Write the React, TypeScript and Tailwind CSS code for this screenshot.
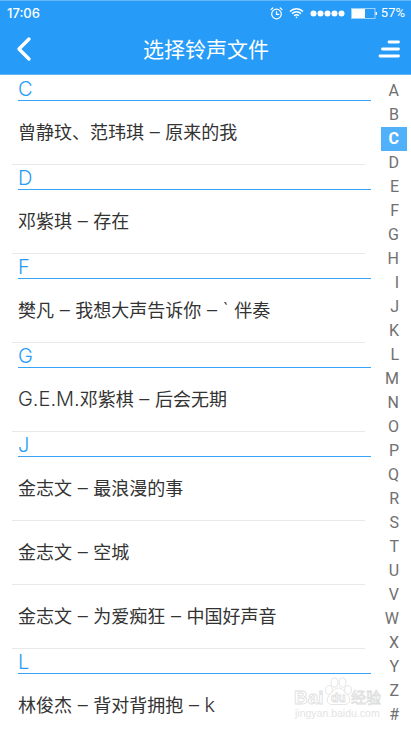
import React from "react";

interface Section {
  letter: string;
  songs: string[];
}

const sections: Section[] = [
  { letter: "C", songs: ["曾静玟、范玮琪 – 原来的我"] },
  { letter: "D", songs: ["邓紫琪 – 存在"] },
  { letter: "F", songs: ["樊凡 – 我想大声告诉你 – ` 伴奏"] },
  { letter: "G", songs: ["G.E.M.邓紫棋 – 后会无期"] },
  {
    letter: "J",
    songs: ["金志文 – 最浪漫的事", "金志文 – 空城", "金志文 – 为爱痴狂 – 中国好声音"],
  },
  { letter: "L", songs: ["林俊杰 – 背对背拥抱 – k"] },
];

const indexLetters = "ABCDEFGHIJKLMNOPQRSTUVWXYZ#".split("");

const StatusBar: React.FC = () => (
  <div className="flex h-6 items-center justify-between pl-[7px] pr-[6px] text-[13px] leading-6">
    <span className="font-[Inter,sans-serif] font-medium">17:06</span>
    <div className="flex items-center gap-[6px]">
      <svg width="13" height="13" viewBox="0 0 13 13" fill="none" stroke="currentColor" strokeWidth="1.2" strokeLinecap="round">
        <circle cx="6.5" cy="7" r="4.8" />
        <path d="M6.5 4.5V7.3H8.8M1 2.6 2.8 1M12 2.6 10.2 1" />
      </svg>
      <svg width="15" height="12" viewBox="0 0 15 12" fill="none" stroke="currentColor" strokeWidth="1.5">
        <path d="M1 4.4C4.6 .7 10.4 .7 14 4.4M3.1 6.6C5.6 4.2 9.4 4.2 11.9 6.6M5.1 8.8C6.5 7.5 8.5 7.5 9.9 8.8" />
        <circle cx="7.5" cy="10.4" r=".8" fill="currentColor" stroke="none" />
      </svg>
      <svg width="35" height="7" viewBox="0 0 35 7" fill="currentColor">
        <circle cx="3.5" cy="3.5" r="3" />
        <circle cx="10.5" cy="3.5" r="3" />
        <circle cx="17.5" cy="3.5" r="3" />
        <circle cx="24.5" cy="3.5" r="3" />
        <circle cx="31.5" cy="3.5" r="3" />
      </svg>
      <div className="flex items-center gap-1">
        <svg width="26" height="11" viewBox="0 0 26 11">
          <rect x=".5" y=".5" width="23.5" height="10" fill="none" stroke="#9dd2fc" />
          <rect x="1" y="1" width="13" height="9" fill="#fff" />
          <rect x="24.5" y="4" width="1.5" height="3" fill="#fff" />
        </svg>
        <span className="font-[Roboto,sans-serif]">57%</span>
      </div>
    </div>
  </div>
);

const Header: React.FC = () => (
  <header className="h-[75px] shrink-0 border-t border-b border-t-[#62b8fa] border-b-[#5fb3f5] bg-[#269cf8] text-white">
    <StatusBar />
    <div className="flex h-12 items-center justify-between pl-4 pr-[10px]">
      <button type="button" aria-label="返回">
        <svg width="16" height="26" viewBox="0 0 16 26" fill="none" stroke="currentColor" strokeWidth="3.4" strokeLinecap="round" strokeLinejoin="round">
          <path d="M13 3 3 13 13 23" />
        </svg>
      </button>
      <h1 className="pt-[3px] pl-[2px] text-[21px]">选择铃声文件</h1>
      <button type="button" aria-label="菜单">
        <svg width="23" height="18" viewBox="0 0 23 18" fill="none" stroke="currentColor" strokeWidth="2.8" strokeLinecap="round">
          <path d="M11 2H20.5M4.5 9H20.5M2 16H20.5" />
        </svg>
      </button>
    </div>
  </header>
);

// Latin runs and dashes use a slightly larger, lighter face than the Chinese text
const SongTitle: React.FC<{ title: string }> = ({ title }) => (
  <span>
    {title.split(/([ A-Za-z.`–]+)/).map((part, i) =>
      i % 2 ? (
        <span key={i} className="text-xl leading-none font-light">
          {part}
        </span>
      ) : (
        part
      )
    )}
  </span>
);

const Watermark: React.FC = () => (
  <svg
    className="pointer-events-none absolute right-7 bottom-2 font-['Liberation_Sans','Noto_Sans_CJK_SC',sans-serif]"
    width="90"
    height="46"
    viewBox="0 0 90 46"
    fill="#fff"
    stroke="#dedede"
    strokeWidth=".8"
  >
    <text x="1" y="28" fontSize="19" fontWeight="bold">Bai</text>
    <ellipse cx="36" cy="14" rx="3.4" ry="4.4" />
    <ellipse cx="41.5" cy="6.5" rx="3.4" ry="4.6" />
    <ellipse cx="49.5" cy="6.5" rx="3.4" ry="4.6" />
    <ellipse cx="55" cy="14" rx="3.4" ry="4.4" />
    <path d="M45.500 12C41 12 40 16 37 18.500C33 21.500 33 28.500 39 28.500H52C58 28.500 58 21.500 54 18.500C51 16 50 12 45.500 12Z" />
    <text x="38" y="26" fontSize="12" fontWeight="bold">du</text>
    <text x="58" y="27" fontSize="15">经验</text>
    <text x="2" y="41" fontSize="10.500" fill="#e4e4e4" stroke="none">jingyan.baidu.com</text>
  </svg>
);

const App: React.FC = () => {
  const [active, setActive] = React.useState("C");

  return (
    <div className="relative flex h-screen flex-col overflow-hidden bg-white font-[Roboto,'Noto_Sans_CJK_SC',sans-serif]">
      <Header />
      <div className="flex min-h-0 flex-1">
        <main className="flex-1 overflow-y-auto pt-px pl-3 font-[Inter,'Noto_Sans_CJK_SC',sans-serif] [scrollbar-width:none]">
          {sections.map((section) => (
            <section key={section.letter} id={section.letter}>
              <h2 className="ml-[6px] h-[25px] border-b border-[#38a3f5] text-xl leading-[26px] font-light text-[#269cf8]">
                {section.letter}
              </h2>
              <ul className="mr-[6px]">
                {section.songs.map((song) => (
                  <li key={song} className="border-b border-[#e9e9e9]">
                    <button type="button" className="flex h-[63px] w-full items-center pt-px pl-[6px] text-left text-lg text-[#333]">
                      <SongTitle title={song} />
                    </button>
                  </li>
                ))}
              </ul>
            </section>
          ))}
        </main>
        <nav className="ml-[10px] mr-1 w-[26px] shrink-0 pt-1">
          {indexLetters.map((letter) => (
            <a
              key={letter}
              href={`#${letter}`}
              onClick={() => setActive(letter)}
              className={
                letter === active
                  ? "block h-6 bg-[#50b0fa] pr-2 text-right text-base leading-6 font-bold text-white"
                  : "block h-6 pr-2 text-right text-base leading-6 text-[#707070]"
              }
            >
              {letter}
            </a>
          ))}
        </nav>
      </div>
      <Watermark />
    </div>
  );
};

export default App;
